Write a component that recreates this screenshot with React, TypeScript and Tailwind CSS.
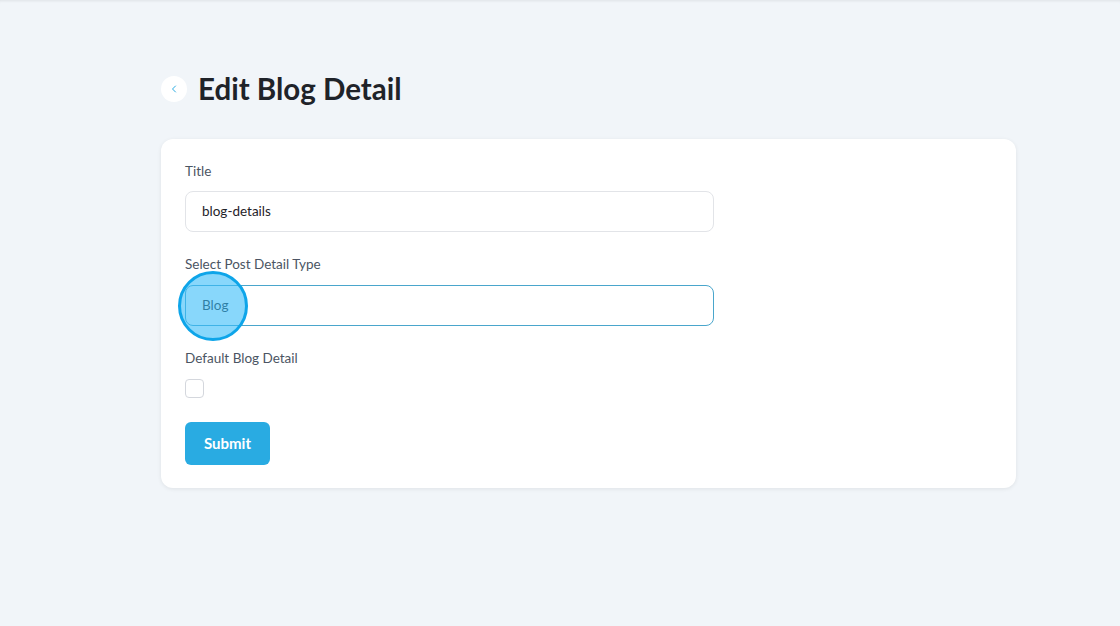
import React from "react";
import { ChevronLeft } from "lucide-react";

export default function App() {
  return (
    <div
      className="min-h-[626px] w-full bg-[#f1f5f9] shadow-[inset_0_3px_3px_-2px_rgba(0,0,0,0.08)]"
      style={{ fontFamily: "Lato, 'Open Sans', sans-serif" }}
    >
      <div className="ml-[161px] w-[855px] pt-[72px]">
        <div className="flex items-center gap-[11px]">
          <button className="flex h-[26px] w-[26px] items-center justify-center rounded-full bg-white text-[#29abe2]">
            <ChevronLeft className="h-[12px] w-[12px]" strokeWidth={2} />
          </button>
          <h1 className="text-[29.5px] font-bold leading-[34px] text-[#1f2329]">Edit Blog Detail</h1>
        </div>

        <div className="mt-[33px] rounded-[12px] bg-white px-6 pb-[23px] pt-[23px] shadow-[0_1px_4px_rgba(0,0,0,0.08)]">
          <label className="block text-[13.5px] leading-[18px] text-[#4b5563]">Title</label>
          <div className="mt-[11px] flex h-[41px] w-[529px] items-center rounded-[8px] border border-[#e2e4e8] px-4 text-[13.5px] text-[#1f2329]">
            blog-details
          </div>

          <label className="mt-[23px] block text-[13.5px] leading-[18px] text-[#4b5563]">Select Post Detail Type</label>
          <div className="relative mt-[12px] flex h-[41px] w-[529px] items-center rounded-[8px] border border-[#4aa6cc] px-4 text-[13.5px] text-[#1f2329]">
            Blog
            <div className="absolute left-[-8px] top-[-15px] h-[70px] w-[70px] rounded-full border-[3px] border-[#0ea5e9] bg-[#38bdf8]/60" />
          </div>

          <label className="mt-[23px] block text-[13.5px] leading-[18px] text-[#4b5563]">Default Blog Detail</label>
          <div className="mt-[12px] h-[19px] w-[19px] rounded-[4px] border border-[#d4d7dd] bg-white" />

          <button className="mt-[24px] flex h-[43px] w-[85px] items-center justify-center rounded-[6px] bg-[#29abe2] text-[15px] font-bold text-white">
            Submit
          </button>
        </div>
      </div>
    </div>
  );
}
